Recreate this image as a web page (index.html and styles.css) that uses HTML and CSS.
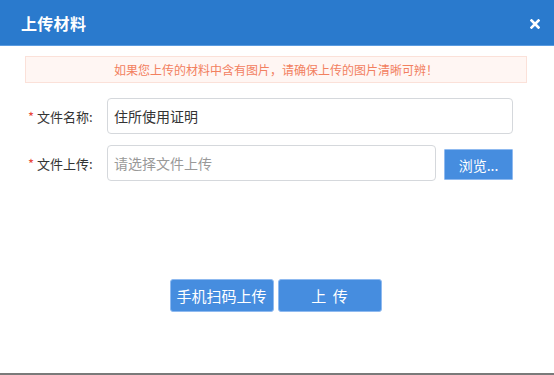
FILE: index.html
```html
<!DOCTYPE html>
<html lang="zh">
<head>
<meta charset="utf-8">
<title>上传材料</title>
<link rel="stylesheet" href="styles.css">
</head>
<body>
<div class="dialog">
  <div class="header">
    <span class="title">上传材料</span>
    <svg class="close" width="10" height="10" viewBox="0 0 10 10"><path d="M1.5 1.5 L8.5 8.5 M8.5 1.5 L1.5 8.5" stroke="#fff" stroke-width="2.6" stroke-linecap="square"/></svg>
  </div>
  <div class="body">
    <div class="notice">如果您上传的材料中含有图片，请确保上传的图片清晰可辨！</div>
    <div class="row row-name">
      <label class="label"><span class="star">*</span>文件名称:</label>
      <div class="input input-wide">住所使用证明</div>
    </div>
    <div class="row row-file">
      <label class="label"><span class="star">*</span>文件上传:</label>
      <div class="input input-file placeholder">请选择文件上传</div>
      <button class="btn btn-browse">浏览...</button>
    </div>
    <div class="actions">
      <button class="btn btn-action">手机扫码上传</button>
      <button class="btn btn-action">上&nbsp;&nbsp;传</button>
    </div>
  </div>
</div>
</body>
</html>
```
FILE: styles.css
```css
* { box-sizing: border-box; }
html, body { margin: 0; padding: 0; background: #fff; }
body {
  width: 554px;
  height: 375px;
  overflow: hidden;
  font-family: "Microsoft YaHei", "Noto Sans CJK SC", "Noto Sans", sans-serif;
}
.dialog {
  height: 375px;
  display: flex;
  flex-direction: column;
  border-bottom: 2px solid #7a7a7a;
}
.header {
  height: 46px;
  background: #2a7acd;
  border-bottom: 1px solid #5a9be0;
  display: flex;
  align-items: center;
  justify-content: space-between;
  padding: 0 14px 0 21px;
  color: #fff;
}
.title {
  font-size: 16px;
  font-weight: bold;
  letter-spacing: 0.3px;
}
.close {
  display: block;
  margin-top: 2px;
}
.body {
  flex: 1;
  padding: 10px 27px 0 25px;
}
.notice {
  height: 27px;
  background: #fff6f3;
  border: 1px solid #fbe1d9;
  color: #f2805f;
  font-size: 12px;
  display: flex;
  align-items: center;
  justify-content: center;
}
.row {
  display: flex;
  align-items: center;
}
.row-name { margin-top: 15px; }
.row-file { margin-top: 11px; }
.label {
  width: 82px;
  padding-left: 3px;
  font-size: 13px;
  color: #333;
}
.star {
  color: #e8473a;
  margin-right: 3px;
}
.input {
  height: 36px;
  border: 1px solid #d5d8dc;
  border-radius: 4px;
  padding: 0 6px;
  display: flex;
  align-items: center;
  font-size: 14px;
  color: #333;
}
.input-wide { width: 406px; }
.input-file { width: 329px; }
.placeholder { color: #999; }
.btn {
  border: 1px solid #8fbaf0;
  background: #468ddf;
  color: #fff;
  font-family: inherit;
  padding: 0;
  cursor: pointer;
}
.btn-browse {
  width: 69px;
  height: 31px;
  margin-left: 8px;
  margin-top: 3px;
  font-size: 14px;
  border-radius: 1px;
}
.actions {
  margin-top: 98px;
  display: flex;
  justify-content: center;
  gap: 4px;
  padding-right: 1px;
}
.btn-action {
  width: 104px;
  height: 33px;
  border-radius: 3px;
  font-size: 15px;
}
```
